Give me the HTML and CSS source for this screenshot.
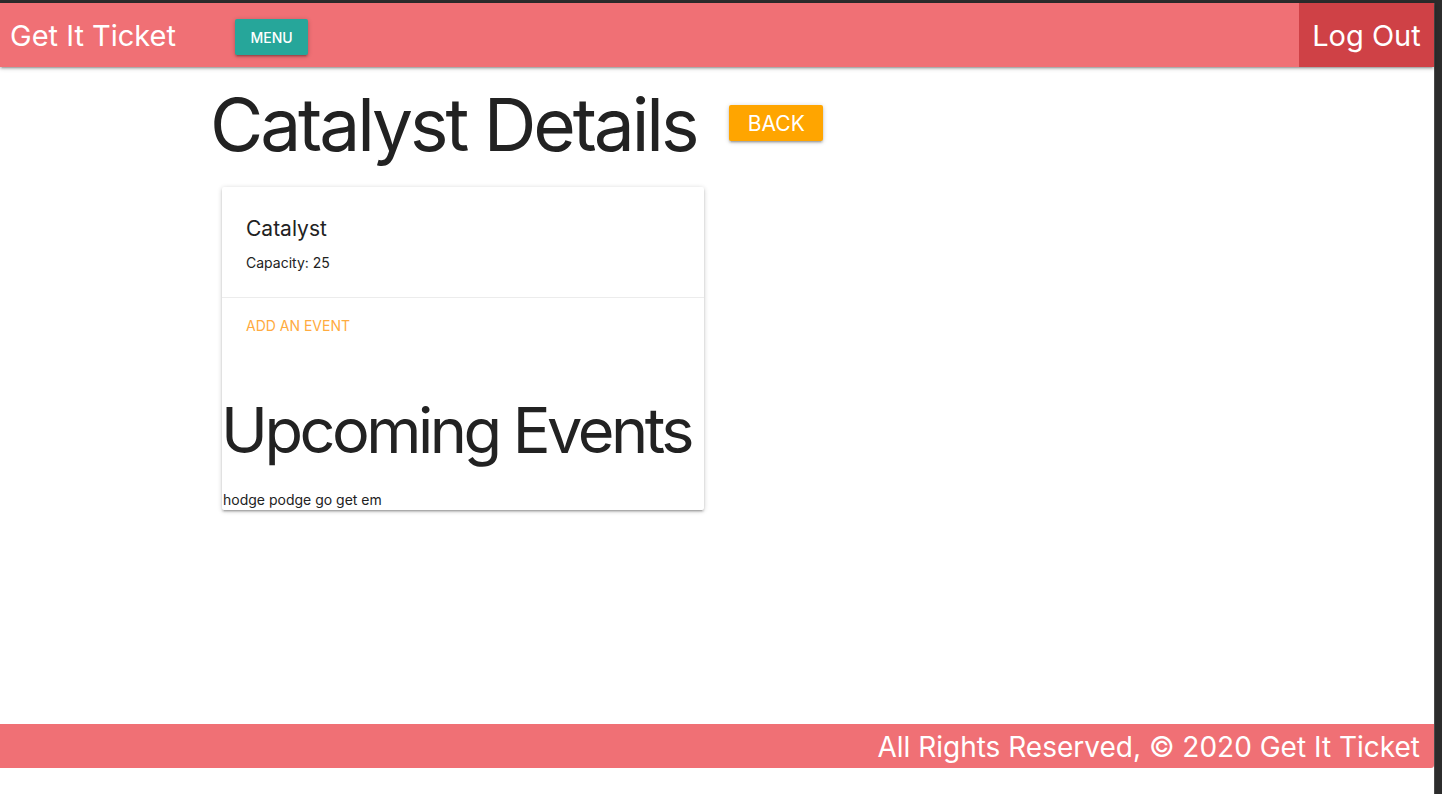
FILE: index.html
```html
<!DOCTYPE html>
<html>
<head>
<meta charset="utf-8">
<link rel="stylesheet" href="styles.css">
</head>
<body>
<div class="frame">
  <div class="page">
    <nav class="navbar">
      <div class="nav-left">
        <span class="brand">Get It Ticket</span>
        <button class="btn-menu">MENU</button>
      </div>
      <button class="btn-logout">Log Out</button>
    </nav>
    <main class="main">
      <div class="title-row">
        <h1 class="page-title">Catalyst Details</h1>
        <button class="btn-back">BACK</button>
      </div>
      <div class="card">
        <div class="card-content">
          <div class="card-title">Catalyst</div>
          <p class="capacity">Capacity: 25</p>
        </div>
        <div class="card-action">
          <a class="action-link">ADD AN EVENT</a>
        </div>
        <h1 class="events-title">Upcoming Events</h1>
        <div class="event">hodge podge go get em</div>
      </div>
    </main>
    <footer class="footer">All Rights Reserved, © 2020 Get It Ticket</footer>
  </div>
</div>
</body>
</html>
```
FILE: styles.css
```css
html, body {
  margin: 0;
  padding: 0;
  background: #2c2c2c;
  height: 100%;
}
body {
  font-family: Inter, "Noto Sans", sans-serif;
  color: #222;
}
.frame {
  padding-top: 3px;
  padding-right: 7px;
  height: 794px;
  box-sizing: border-box;
}
.page {
  background: #fff;
  height: 100%;
  border-right: 1px solid #4a4a4a;
  display: flex;
  flex-direction: column;
}
.navbar {
  height: 64px;
  background: #f07075;
  display: flex;
  justify-content: space-between;
  align-items: stretch;
  box-shadow: 0 2px 2px 0 rgba(0,0,0,0.14), 0 3px 1px -2px rgba(0,0,0,0.12), 0 1px 5px 0 rgba(0,0,0,0.2);
  position: relative;
  z-index: 1;
}
.nav-left {
  display: flex;
  align-items: center;
}
.brand {
  color: #fff;
  font-size: 29px;
  padding-left: 10px;
  width: 225px;
}
.btn-menu {
  background: #26a69a;
  color: #fff;
  border: none;
  height: 36px;
  width: 73px;
  font-family: Inter, sans-serif;
  font-size: 14px;
  font-weight: 500;
  border-radius: 2px;
  margin-top: 4px;
  box-shadow: 0 2px 2px 0 rgba(0,0,0,0.14), 0 3px 1px -2px rgba(0,0,0,0.12), 0 1px 5px 0 rgba(0,0,0,0.2);
}
.btn-logout {
  background: #cf4146;
  color: #fff;
  border: none;
  width: 135px;
  font-family: Inter, sans-serif;
  font-size: 29px;
  padding: 0;
}
.main {
  flex: 1;
  padding-left: 212px;
}
.title-row {
  display: flex;
  align-items: flex-start;
}
.page-title {
  margin: 8px 0 0 -2px;
  font-weight: 400;
  font-size: 73px;
  line-height: 100px;
  letter-spacing: -3.1px;
  white-space: nowrap;
}
.btn-back {
  margin-left: 33px;
  margin-top: 38px;
  background: #ffa500;
  color: #fff;
  border: none;
  height: 36px;
  width: 94px;
  font-family: Inter, sans-serif;
  font-size: 21px;
  border-radius: 2px;
  box-shadow: 0 2px 2px 0 rgba(0,0,0,0.14), 0 3px 1px -2px rgba(0,0,0,0.12), 0 1px 5px 0 rgba(0,0,0,0.2);
}
.card {
  margin: 12px 0 0 10px;
  width: 482px;
  background: #fff;
  border-radius: 2px;
  box-shadow: 0 2px 2px 0 rgba(0,0,0,0.14), 0 3px 1px -2px rgba(0,0,0,0.12), 0 1px 5px 0 rgba(0,0,0,0.2);
}
.card-content {
  padding: 24px;
  height: 62px;
}
.card-title {
  margin-top: 2px;
  font-size: 21px;
  line-height: 32px;
}
.capacity {
  margin: 8px 0 0 0;
  font-size: 14px;
  line-height: 20px;
}
.card-action {
  border-top: 1px solid rgba(160,160,160,0.2);
  padding: 16px 24px;
  height: 24px;
}
.action-link {
  color: #ffab40;
  font-size: 14px;
  line-height: 24px;
}
.events-title {
  margin: 36px 0 0 -1px;
  font-weight: 400;
  font-size: 63px;
  line-height: 80px;
  letter-spacing: -3.5px;
  white-space: nowrap;
}
.event {
  margin-top: 20px;
  padding-left: 1px;
  font-size: 14px;
  line-height: 20px;
}
.footer {
  height: 44px;
  background: #f07075;
  color: #fff;
  font-size: 28px;
  line-height: 46px;
  text-align: right;
  padding-right: 14px;
  margin-bottom: 26px;
  border-bottom-right-radius: 3px;
}
```
